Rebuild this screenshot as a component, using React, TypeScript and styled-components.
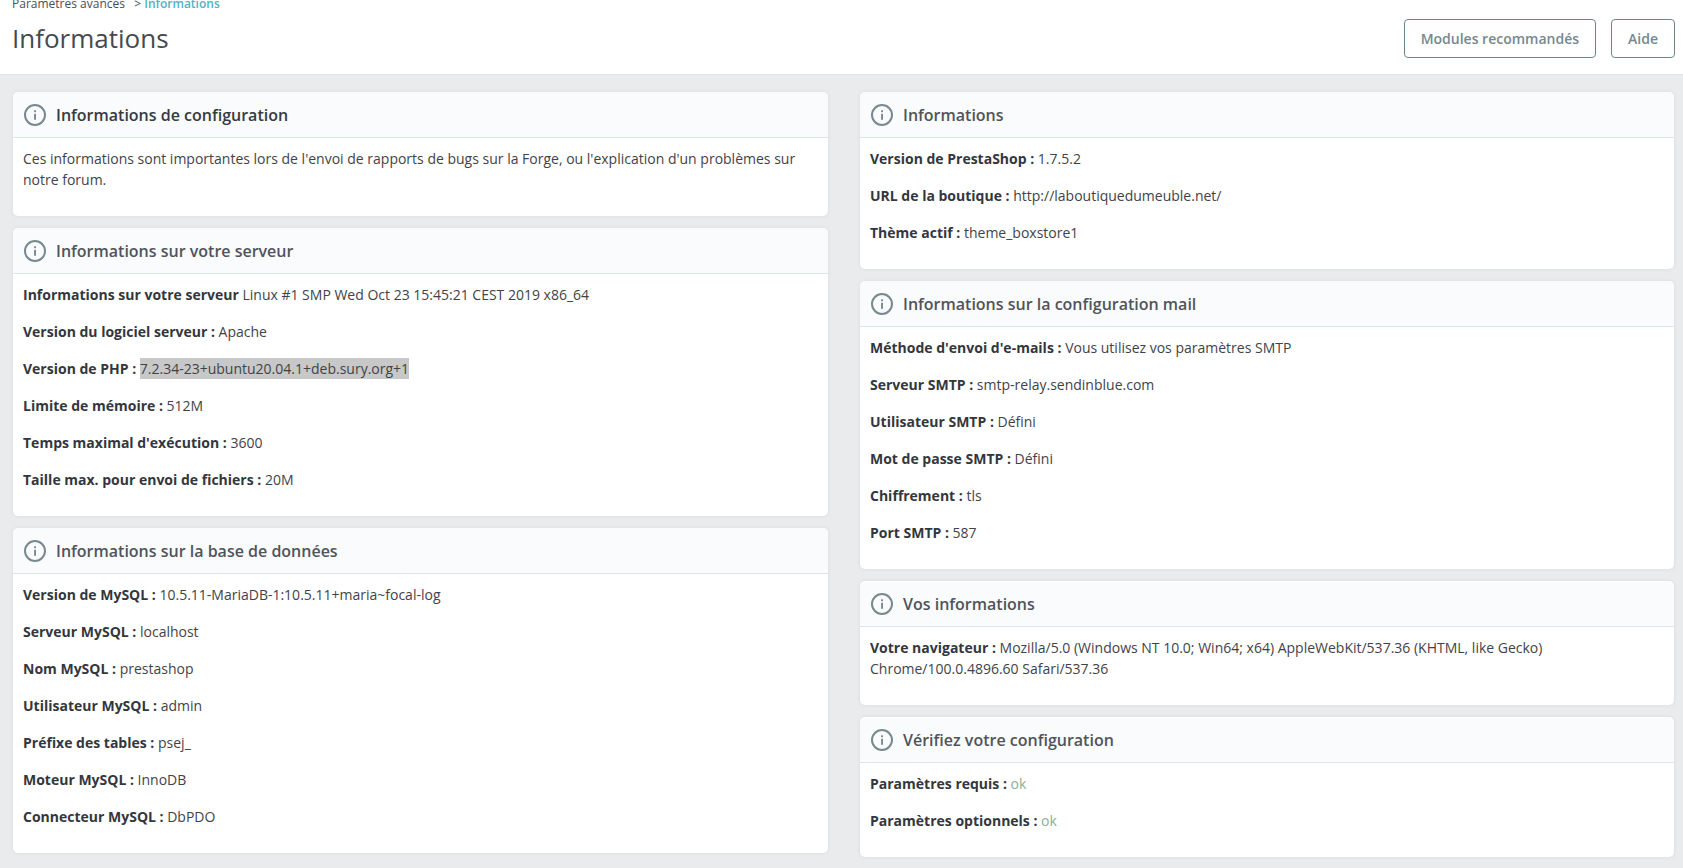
import React from "react";
import styled, { createGlobalStyle } from "styled-components";

const Global = createGlobalStyle`
  html, body { margin: 0; padding: 0; height: 100%; background: #eaebec; overflow: hidden; }
  body { font-family: "Open Sans", "Liberation Sans", sans-serif; font-size: 14px; line-height: 21px; color: #3f4349; }
`;
const Page = styled.div`display: flex; flex-direction: column; height: 868px;`;
const Header = styled.header`
  height: 75px; flex: none; box-sizing: border-box; background: #fff; border-bottom: 1px solid #dfe2e4;
  padding: 0 8px 0 12px; display: flex; justify-content: space-between; overflow: hidden;
`;
const TitleBlock = styled.div`display: flex; flex-direction: column; margin-top: -4px;`;
const Breadcrumb = styled.div`font-size: 12px; line-height: 16px; white-space: pre; color: #4a4e54;`;
const Current = styled.span`color: #4fb3c6; font-weight: 600;`;
const Title = styled.h1`margin: 8px 0 0; font-size: 26px; line-height: 36px; font-weight: 400; color: #454a50;`;
const Actions = styled.div`display: flex; gap: 15px; padding-top: 19px;`;
const Btn = styled.button`
  height: 39px; box-sizing: border-box; padding: 0 16px; background: #fff; border: 1px solid #6c868e; border-radius: 4px;
  color: #74888f; font: 600 14px/21px "Open Sans", sans-serif;
`;
const Columns = styled.main`
  display: grid; grid-template-columns: 815px 814px; column-gap: 32px; padding: 17px 0 0 13px; align-items: start;
`;
const Column = styled.div`display: flex; flex-direction: column; gap: 12px;`;
const Card = styled.section`
  background: #fff; border-radius: 5px; box-shadow: 0 0 4px rgba(0,0,0,.07); overflow: hidden;
`;
const CardHeader = styled.div`
  height: 46px; box-sizing: border-box; background: #fafbfc; border-bottom: 1px solid #dbe6e9;
  padding: 0 0 0 10px; display: flex; align-items: center; gap: 9px;
`;
const CardTitle = styled.h3<{ $strong?: boolean }>`
  margin: 0; font-size: 16px; line-height: 22px; font-weight: 600; color: ${p => (p.$strong ? "#363a41" : "#50545a")};
`;
const CardBody = styled.div`padding: 10px;`;
const Row = styled.p`margin: 0 0 16px; font-size: 14px; line-height: 21px;`;
const Label = styled.b`font-weight: 700; color: #33373d;`;
const Selected = styled.span`background: #c8c8c8; display: inline-block;`;
const Ok = styled.span`color: #8fae92;`;

const InfoIcon = () => (
  <svg width="24" height="24" viewBox="0 0 24 24" fill="none">
    <circle cx="12" cy="12" r="10" stroke="#78898f" strokeWidth="2" />
    <rect x="11.1" y="10.8" width="1.9" height="6" fill="#78898f" />
    <rect x="11.1" y="7.3" width="1.9" height="1.9" fill="#78898f" />
  </svg>
);

type Item = { l: string; v: React.ReactNode };
const Panel = ({ title, strong, items, children }: { title: string; strong?: boolean; items?: Item[]; children?: React.ReactNode }) => (
  <Card>
    <CardHeader><InfoIcon /><CardTitle $strong={strong}>{title}</CardTitle></CardHeader>
    <CardBody>
      {children}
      {items?.map(i => <Row key={i.l}><Label>{i.l}</Label> {i.v}</Row>)}
    </CardBody>
  </Card>
);

export default function App() {
  return (
    <Page>
      <Global />
      <Header>
        <TitleBlock>
          <Breadcrumb>Paramètres avancés{"   > "}<Current>Informations</Current></Breadcrumb>
          <Title>Informations</Title>
        </TitleBlock>
        <Actions>
          <Btn>Modules recommandés</Btn>
          <Btn>Aide</Btn>
        </Actions>
      </Header>
      <Columns>
        <Column>
          <Panel title="Informations de configuration" strong>
            <Row>Ces informations sont importantes lors de l'envoi de rapports de bugs sur la Forge, ou l'explication d'un problèmes sur notre forum.</Row>
          </Panel>
          <Panel title="Informations sur votre serveur" items={[
            { l: "Informations sur votre serveur", v: "Linux #1 SMP Wed Oct 23 15:45:21 CEST 2019 x86_64" },
            { l: "Version du logiciel serveur :", v: "Apache" },
            { l: "Version de PHP :", v: <Selected>7.2.34-23+ubuntu20.04.1+deb.sury.org+1</Selected> },
            { l: "Limite de mémoire :", v: "512M" },
            { l: "Temps maximal d'exécution :", v: "3600" },
            { l: "Taille max. pour envoi de fichiers :", v: "20M" },
          ]} />
          <Panel title="Informations sur la base de données" items={[
            { l: "Version de MySQL :", v: "10.5.11-MariaDB-1:10.5.11+maria~focal-log" },
            { l: "Serveur MySQL :", v: "localhost" },
            { l: "Nom MySQL :", v: "prestashop" },
            { l: "Utilisateur MySQL :", v: "admin" },
            { l: "Préfixe des tables :", v: "psej_" },
            { l: "Moteur MySQL :", v: "InnoDB" },
            { l: "Connecteur MySQL :", v: "DbPDO" },
          ]} />
        </Column>
        <Column>
          <Panel title="Informations" items={[
            { l: "Version de PrestaShop :", v: "1.7.5.2" },
            { l: "URL de la boutique :", v: "http://laboutiquedumeuble.net/" },
            { l: "Thème actif :", v: "theme_boxstore1" },
          ]} />
          <Panel title="Informations sur la configuration mail" items={[
            { l: "Méthode d'envoi d'e-mails :", v: "Vous utilisez vos paramètres SMTP" },
            { l: "Serveur SMTP :", v: "smtp-relay.sendinblue.com" },
            { l: "Utilisateur SMTP :", v: "Défini" },
            { l: "Mot de passe SMTP :", v: "Défini" },
            { l: "Chiffrement :", v: "tls" },
            { l: "Port SMTP :", v: "587" },
          ]} />
          <Panel title="Vos informations" items={[
            { l: "Votre navigateur :", v: "Mozilla/5.0 (Windows NT 10.0; Win64; x64) AppleWebKit/537.36 (KHTML, like Gecko) Chrome/100.0.4896.60 Safari/537.36" },
          ]} />
          <Panel title="Vérifiez votre configuration" items={[
            { l: "Paramètres requis :", v: <Ok>ok</Ok> },
            { l: "Paramètres optionnels :", v: <Ok>ok</Ok> },
          ]} />
        </Column>
      </Columns>
    </Page>
  );
}
